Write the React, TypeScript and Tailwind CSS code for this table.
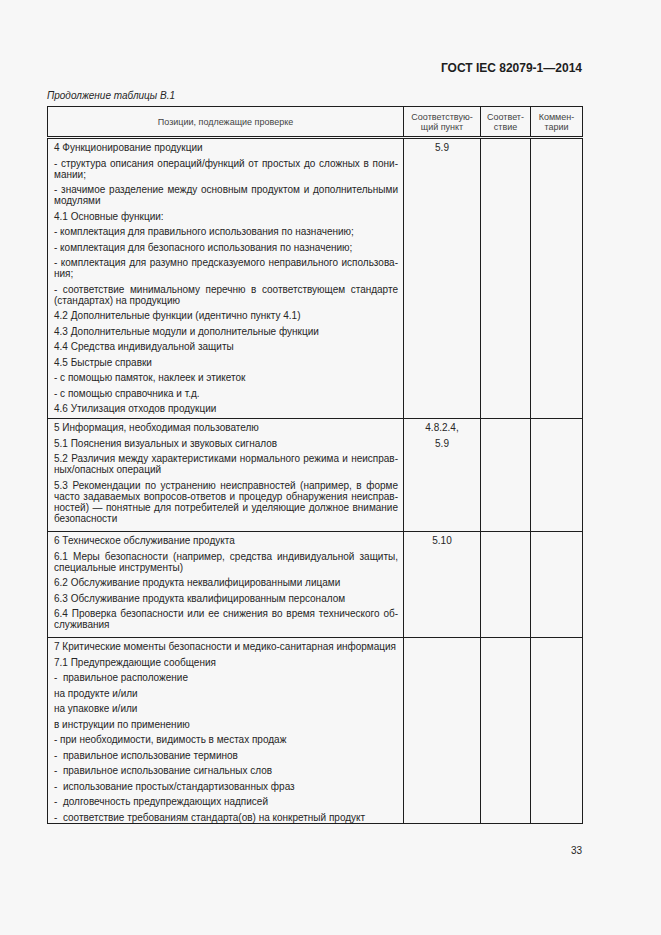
import React from "react";

type Row = { refs: string[]; h: string; paras: string[][] };

const rows: Row[] = [
  {
    refs: ["5.9"],
    h: "h-[276px]",
    paras: [
      ["4 Функционирование продукции"],
      ["- структура описания операций/функций от простых до сложных в пони-", "мании;"],
      ["- значимое разделение между основным продуктом и дополнительными", "модулями"],
      ["4.1 Основные функции:"],
      ["- комплектация для правильного использования по назначению;"],
      ["- комплектация для безопасного использования по назначению;"],
      ["- комплектация для разумно предсказуемого неправильного использова-", "ния;"],
      ["- соответствие минимальному перечню в соответствующем стандарте", "(стандартах) на продукцию"],
      ["4.2 Дополнительные функции (идентично пункту 4.1)"],
      ["4.3 Дополнительные модули и дополнительные функции"],
      ["4.4 Средства индивидуальной защиты"],
      ["4.5 Быстрые справки"],
      ["- с помощью памяток, наклеек и этикеток"],
      ["- с помощью справочника и т.д."],
      ["4.6 Утилизация отходов продукции"],
    ],
  },
  {
    refs: ["4.8.2.4,", "5.9"],
    h: "h-[109px]",
    paras: [
      ["5 Информация, необходимая пользователю"],
      ["5.1 Пояснения визуальных и звуковых сигналов"],
      ["5.2 Различия между характеристиками нормального режима и неисправ-", "ных/опасных операций"],
      [
        "5.3 Рекомендации по устранению неисправностей (например, в форме",
        "часто задаваемых вопросов-ответов и процедур обнаружения неисправ-",
        "ностей) — понятные для потребителей и уделяющие должное внимание",
        "безопасности",
      ],
    ],
  },
  {
    refs: ["5.10"],
    h: "h-[102px]",
    paras: [
      ["6 Техническое обслуживание продукта"],
      ["6.1 Меры безопасности (например, средства индивидуальной защиты,", "специальные инструменты)"],
      ["6.2 Обслуживание продукта неквалифицированными лицами"],
      ["6.3 Обслуживание продукта квалифицированным персоналом"],
      ["6.4 Проверка безопасности или ее снижения во время технического об-", "служивания"],
    ],
  },
  {
    refs: [],
    h: "h-[182px]",
    paras: [
      ["7 Критические моменты безопасности и медико-санитарная информация"],
      ["7.1 Предупреждающие сообщения"],
      ["-  правильное расположение"],
      ["на продукте и/или"],
      ["на упаковке и/или"],
      ["в инструкции по применению"],
      ["- при необходимости, видимость в местах продаж"],
      ["-  правильное использование терминов"],
      ["-  правильное использование сигнальных слов"],
      ["-  использование простых/стандартизованных фраз"],
      ["-  долговечность предупреждающих надписей"],
      ["-  соответствие требованиям стандарта(ов) на конкретный продукт"],
    ],
  },
];

function Para({ lines }: { lines: string[] }) {
  return (
    <div className="mt-[4.5px] first:mt-0">
      {lines.map((l, i) => (
        <div
          key={i}
          className={
            i < lines.length - 1
              ? "whitespace-pre text-justify [text-align-last:justify]"
              : "whitespace-pre"
          }
        >
          {l}
        </div>
      ))}
    </div>
  );
}

const headCell =
  "border border-b-[3px] border-[#1e1e1e] [border-bottom-style:double] font-normal";

export default function App() {
  return (
    <div className="min-h-[935px] w-[661px] bg-[#f7f7f7] pl-[47px] pt-[61px] text-[#262626] [font-family:'Liberation_Sans',Arial,sans-serif]">
      <div className="w-[535px] text-right text-[12px] font-bold leading-[14px] text-[#1e1e1e]">
        ГОСТ IEC 82079-1—2014
      </div>
      <div className="mt-[15px] text-[10px] italic leading-[12px]">Продолжение таблицы B.1</div>
      <table className="mt-[4px] w-[535px] table-fixed border-collapse text-[10px] leading-[11px]">
        <colgroup>
          <col className="w-[356px]" />
          <col className="w-[77px]" />
          <col className="w-[50px]" />
          <col className="w-[52px]" />
        </colgroup>
        <thead>
          <tr className="h-[31px] text-[9px] leading-[10px] text-[#444]">
            <th className={headCell}>Позиции, подлежащие проверке</th>
            <th className={headCell}>
              Соответствую-
              <br />
              щий пункт
            </th>
            <th className={headCell}>
              Соответ-
              <br />
              ствие
            </th>
            <th className={headCell}>
              Коммен-
              <br />
              тарии
            </th>
          </tr>
        </thead>
        <tbody>
          {rows.map((r, i) => (
            <tr key={i}>
              <td className="border border-[#1e1e1e] pb-0 pl-[6px] pr-[5px] pt-[3px] align-top">
                <div className={r.h}>
                  {r.paras.map((p, j) => (
                    <Para key={j} lines={p} />
                  ))}
                </div>
              </td>
              <td className="border border-[#1e1e1e] pt-[3px] text-center align-top">
                {r.refs.map((s, j) => (
                  <div key={j} className="mt-[4.5px] first:mt-0">
                    {s}
                  </div>
                ))}
              </td>
              <td className="border border-[#1e1e1e]" />
              <td className="border border-[#1e1e1e]" />
            </tr>
          ))}
        </tbody>
      </table>
      <div className="mt-[21px] w-[535px] text-right text-[10px] leading-[12px]">33</div>
    </div>
  );
}
